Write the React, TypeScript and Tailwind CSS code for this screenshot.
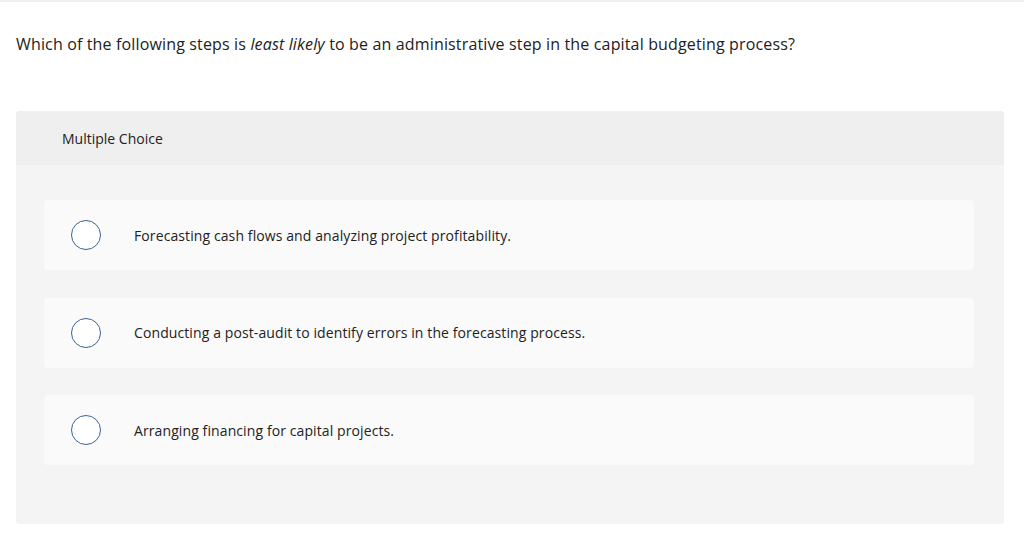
import React from 'react';

const options = [
  'Forecasting cash flows and analyzing project profitability.',
  'Conducting a post-audit to identify errors in the forecasting process.',
  'Arranging financing for capital projects.',
];

const App: React.FC = () => {
  return (
    <div
      className="min-h-[553px] w-full bg-white border-t-2 border-[#f0f0f0] text-[#222]"
      style={{ fontFamily: '"Open Sans", sans-serif' }}
    >
      <div className="px-4 pt-[31px]">
        <p className="text-[16px] leading-[22px] tracking-[0.15px]">
          Which of the following steps is <em>least likely</em> to be an administrative step in the capital
          budgeting process?
        </p>
      </div>

      <div className="ml-4 mr-5 mt-[56px] rounded bg-[#f4f4f4] overflow-hidden">
        <div className="h-[54px] bg-[#efefef] flex items-center pl-[46px] text-[14px]">Multiple Choice</div>
        <div className="pl-7 pr-[30px] pt-[35px] pb-[59px] flex flex-col gap-[27.5px]">
          {options.map((opt) => (
            <div key={opt} className="h-[70px] rounded bg-[#fafafa] flex items-center">
              <div className="ml-[27px] w-[30px] h-[30px] rounded-full border-[1.5px] border-[#3b6493] bg-white" />
              <span className="ml-[33px] text-[14px] tracking-[0.1px]">{opt}</span>
            </div>
          ))}
        </div>
      </div>
    </div>
  );
};

export default App;
